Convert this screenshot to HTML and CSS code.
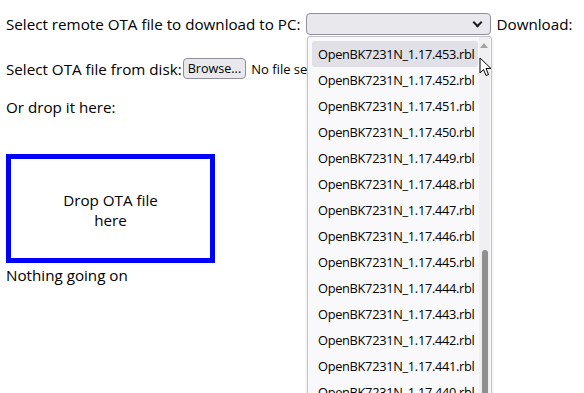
FILE: index.html
```html
<!DOCTYPE html>
<html lang="en">
<head>
    <meta charset="UTF-8">
    <title>OTA</title>
    <link rel="stylesheet" href="styles.css">
</head>
<body>
    <div class="row row-remote">
        <span>Select remote OTA file to download to PC:</span>
        <div class="select"><span class="chev"></span></div>
        <span>Download:</span>
    </div>
    <div class="row row-disk">
        <span>Select OTA file from disk:</span><button class="browse">Browse...</button><span class="nofile">No file se</span>
    </div>
    <div class="row row-drop">Or drop it here:</div>
    <div class="dropbox">
        <div class="drop-label">Drop OTA file here</div>
    </div>
    <div class="status">Nothing going on</div>

    <div class="popup">
        <ul class="options">
            <li class="active">OpenBK7231N_1.17.453.rbl</li>
            <li>OpenBK7231N_1.17.452.rbl</li>
            <li>OpenBK7231N_1.17.451.rbl</li>
            <li>OpenBK7231N_1.17.450.rbl</li>
            <li>OpenBK7231N_1.17.449.rbl</li>
            <li>OpenBK7231N_1.17.448.rbl</li>
            <li>OpenBK7231N_1.17.447.rbl</li>
            <li>OpenBK7231N_1.17.446.rbl</li>
            <li>OpenBK7231N_1.17.445.rbl</li>
            <li>OpenBK7231N_1.17.444.rbl</li>
            <li>OpenBK7231N_1.17.443.rbl</li>
            <li>OpenBK7231N_1.17.442.rbl</li>
            <li>OpenBK7231N_1.17.441.rbl</li>
            <li>OpenBK7231N_1.17.440.rbl</li>
        </ul>
        <div class="scrollbar">
            <span class="arrow-up"></span>
            <span class="thumb"></span>
        </div>
    </div>

    <svg class="cursor" width="14" height="21" viewBox="0 0 14 21">
        <path d="M1 1 L1 16 L4.5 12.5 L7 18.5 L9.5 17.5 L7 11.5 L12 11.5 Z" fill="#fff" stroke="#000" stroke-width="1" stroke-linejoin="round"/>
    </svg>
</body>
</html>
```

FILE: styles.css
```css
body {
    margin: 0;
    padding: 0 6px;
    font-family: "Open Sans", "Noto Sans", sans-serif;
    font-size: 15.2px;
    color: #000;
    background: #fff;
    overflow: hidden;
}
.row {
    display: flex;
    align-items: center;
    white-space: nowrap;
    line-height: 20px;
}
.row-remote {
    margin-top: 13px;
    height: 22px;
}
.select {
    width: 183px;
    height: 20px;
    margin: 0 6px 0 5px;
    border: 1px solid #8f8f9d;
    border-radius: 4px;
    background: #e9e9ed;
    position: relative;
}
.chev {
    position: absolute;
    right: 9px;
    top: 5px;
    width: 5px;
    height: 5px;
    border-right: 2px solid #1b1b1f;
    border-bottom: 2px solid #1b1b1f;
    transform: rotate(45deg);
}
.row-disk {
    margin-top: 23px;
    height: 21px;
}
.browse {
    height: 21px;
    padding: 0 4px;
    margin: 0 5px 0 1px;
    font-family: inherit;
    font-size: 12.6px;
    color: #000;
    background: #e9e9ed;
    border: 1px solid #8f8f9d;
    border-radius: 4px;
}
.nofile {
    font-size: 13px;
}
.row-drop {
    margin-top: 18px;
}
.dropbox {
    margin-top: 37px;
    width: 199px;
    height: 99px;
    border: 5px solid #0000ff;
    display: flex;
    align-items: center;
    justify-content: center;
}
.drop-label {
    width: 110px;
    text-align: center;
    line-height: 20px;
    margin-top: 3px;
}
.status {
    margin-top: 2px;
    line-height: 20px;
}
.popup {
    position: absolute;
    left: 307px;
    top: 36px;
    width: 183px;
    height: 370px;
    border: 1px solid #c4c4c8;
    border-radius: 3px;
    background: #f9f9fb;
    box-shadow: 0 1px 3px rgba(0, 0, 0, 0.15);
    display: flex;
}
.options {
    list-style: none;
    margin: 0;
    padding: 4px 0 0 4px;
    width: 166px;
    font-size: 12.8px;
    letter-spacing: -0.3px;
}
.options li {
    height: 26px;
    line-height: 26px;
    padding-left: 6px;
    border-radius: 3px;
    white-space: nowrap;
}
.options li.active {
    background: #e0e0e6;
}
.scrollbar {
    width: 11px;
    margin-left: 1px;
    background: #f0f0f2;
    position: relative;
}
.arrow-up {
    position: absolute;
    left: 1px;
    top: 6px;
    border-left: 4px solid transparent;
    border-right: 4px solid transparent;
    border-bottom: 5px solid #a3a3a3;
}
.thumb {
    position: absolute;
    left: 3px;
    top: 213px;
    width: 6px;
    height: 200px;
    border-radius: 3px;
    background: #8f8f8f;
}
.cursor {
    position: absolute;
    left: 479px;
    top: 57px;
}
```
